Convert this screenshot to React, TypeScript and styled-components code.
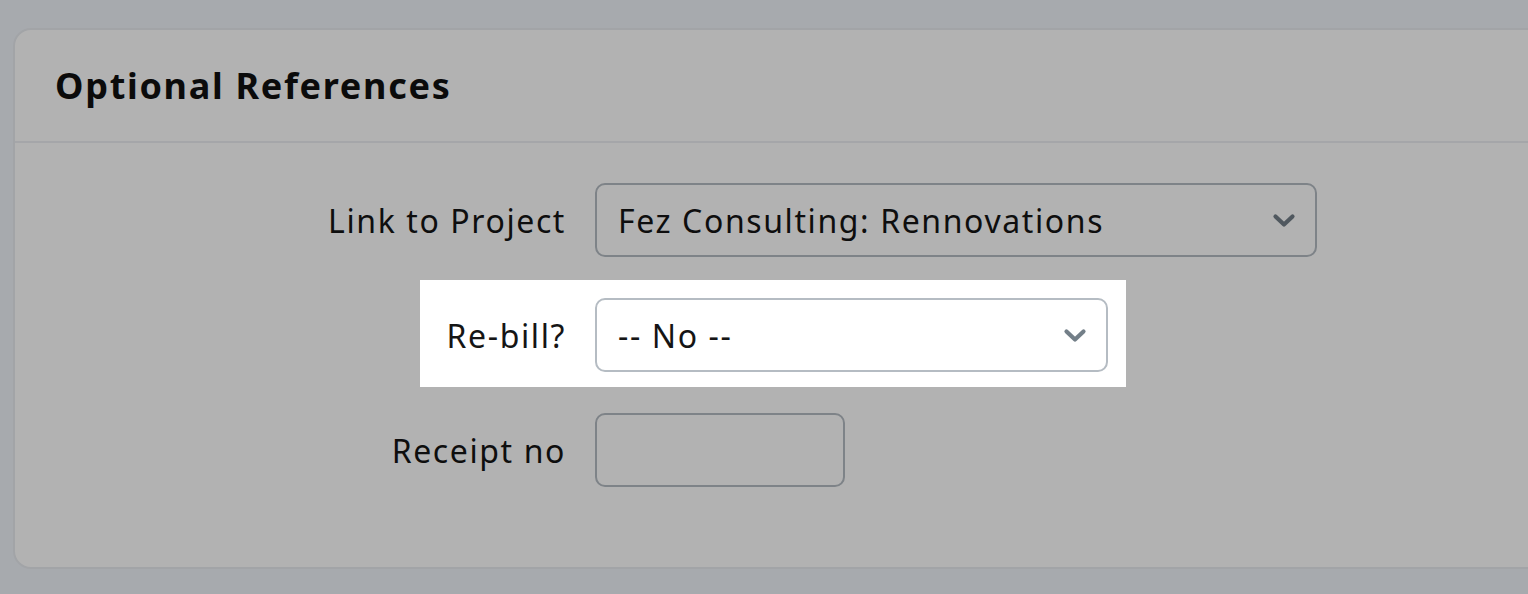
import React from "react";
import styled, { createGlobalStyle } from "styled-components";

const GlobalStyle = createGlobalStyle`
  html, body {
    margin: 0;
    padding: 0;
    background: #f0f4fa;
    overflow: hidden;
  }
  body {
    font-family: "Noto Sans", "Open Sans", sans-serif;
    color: #151515;
  }
`;

const Page = styled.div`
  width: 1528px;
  height: 594px;
  padding: 28px 0 0 13px;
  box-sizing: border-box;
  overflow: hidden;
`;

const Card = styled.section`
  width: 1600px;
  background: #ffffff;
  border: 2px solid #e8ebf0;
  border-radius: 18px;
  box-sizing: border-box;
`;

const CardHeader = styled.header`
  height: 111px;
  display: flex;
  align-items: center;
  padding-left: 40px;
  border-bottom: 2px solid #eceef3;
`;

const Title = styled.h2`
  margin: 0;
  font-size: 36px;
  font-weight: 700;
  letter-spacing: 1.7px;
  color: #111111;
`;

const CardBody = styled.div`
  display: flex;
  flex-direction: column;
  gap: 41px;
  padding: 40px 0 80px 0;
`;

const Row = styled.div`
  position: relative;
  display: grid;
  grid-template-columns: 551px auto;
  column-gap: 29px;
  align-items: center;
`;

const Label = styled.label`
  text-align: right;
  font-size: 32px;
  letter-spacing: 1.6px;
  color: #151515;
`;

// Tour-style spotlight: everything outside it is dimmed by its shadow.
const Spotlight = styled.div`
  position: absolute;
  left: 405px;
  top: -18px;
  bottom: -15px;
  width: 706px;
  pointer-events: none;
  box-shadow: 0 0 0 3000px rgba(0, 0, 0, 0.3);
  z-index: 5;
`;

const SelectBox = styled.div<{ $width: number }>`
  width: ${(p) => p.$width}px;
  height: 74px;
  box-sizing: border-box;
  border: 2px solid #b5bcc3;
  border-radius: 10px;
  background: #ffffff;
  display: flex;
  align-items: center;
  justify-content: space-between;
  padding: 0 19px 0 21px;
  font-size: 32px;
  letter-spacing: 1.6px;
  color: #151515;
`;

const TextInput = styled.input`
  width: 250px;
  height: 74px;
  box-sizing: border-box;
  border: 2px solid #b5bcc3;
  border-radius: 10px;
  background: #ffffff;
  font: inherit;
  font-size: 32px;
  padding: 0 20px;
  outline: none;
`;

const Chevron = () => (
  <svg width="24" height="15" viewBox="0 0 24 15" fill="none">
    <path
      d="M3.5 3.5 L12 11.5 L20.5 3.5"
      stroke="#737f88"
      strokeWidth="4.2"
      strokeLinecap="round"
      strokeLinejoin="round"
    />
  </svg>
);

export default function App() {
  return (
    <>
      <GlobalStyle />
      <Page>
        <Card>
          <CardHeader>
            <Title>Optional References</Title>
          </CardHeader>
          <CardBody>
            <Row>
              <Label>Link to Project</Label>
              <SelectBox $width={722}>
                <span>Fez Consulting: Rennovations</span>
                <Chevron />
              </SelectBox>
            </Row>
            <Row>
              <Spotlight />
              <Label>Re-bill?</Label>
              <SelectBox $width={513}>
                <span>-- No --</span>
                <Chevron />
              </SelectBox>
            </Row>
            <Row>
              <Label>Receipt no</Label>
              <TextInput type="text" />
            </Row>
          </CardBody>
        </Card>
      </Page>
    </>
  );
}
